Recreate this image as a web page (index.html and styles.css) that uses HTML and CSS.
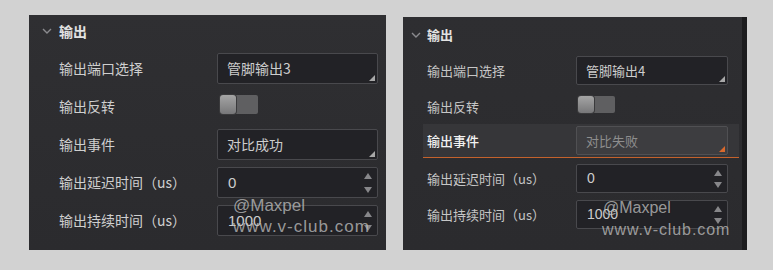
FILE: index.html
```html
<!DOCTYPE html>
<html lang="zh">
<head>
<meta charset="utf-8">
<link rel="stylesheet" href="styles.css">
</head>
<body>
<div class="stage">
  <section class="panel panel-a">
    <div class="hdr">
      <svg class="chev" width="10" height="6" viewBox="0 0 10 6"><polyline points="1,1 5,5 9,1" fill="none" stroke="#8a8a8e" stroke-width="1.4"/></svg>
      <span class="hdr-t">输出</span>
    </div>
    <div class="row">
      <span class="lbl">输出端口选择</span>
      <div class="box"><span class="val">管脚输出3</span><i class="corner"></i></div>
    </div>
    <div class="row">
      <span class="lbl">输出反转</span>
      <div class="toggle"><i class="knob"></i><i class="track"></i></div>
    </div>
    <div class="row">
      <span class="lbl">输出事件</span>
      <div class="box"><span class="val">对比成功</span><i class="corner"></i></div>
    </div>
    <div class="row">
      <span class="lbl">输出延迟时间（us）</span>
      <div class="box spin"><span class="val num">0</span><span class="arrows"><i class="up"></i><i class="dn"></i></span></div>
    </div>
    <div class="row">
      <span class="lbl">输出持续时间（us）</span>
      <div class="box spin"><span class="val num">1000</span><span class="arrows"><i class="up"></i><i class="dn"></i></span></div>
    </div>
    <div class="wm wm-a"><span class="wm1">@Maxpel</span><span class="wm2">www.v-club.com</span></div>
  </section>

  <section class="panel panel-b">
    <div class="hdr">
      <svg class="chev" width="10" height="6" viewBox="0 0 10 6"><polyline points="1,1 5,5 9,1" fill="none" stroke="#8a8a8e" stroke-width="1.4"/></svg>
      <span class="hdr-t">输出</span>
    </div>
    <div class="row">
      <span class="lbl">输出端口选择</span>
      <div class="box"><span class="val">管脚输出4</span><i class="corner"></i></div>
    </div>
    <div class="row">
      <span class="lbl">输出反转</span>
      <div class="toggle"><i class="knob"></i><i class="track"></i></div>
    </div>
    <div class="row hl">
      <span class="lbl">输出事件</span>
      <div class="box dis"><span class="val">对比失败</span><i class="corner orange"></i></div>
    </div>
    <div class="row">
      <span class="lbl">输出延迟时间（us）</span>
      <div class="box spin"><span class="val num">0</span><span class="arrows"><i class="up"></i><i class="dn"></i></span></div>
    </div>
    <div class="row">
      <span class="lbl">输出持续时间（us）</span>
      <div class="box spin"><span class="val num">1000</span><span class="arrows"><i class="up"></i><i class="dn"></i></span></div>
    </div>
    <div class="wm wm-b"><span class="wm1">@Maxpel</span><span class="wm2">www.v-club.com</span></div>
  </section>
</div>
</body>
</html>
```

FILE: styles.css
```css
html, body {
  margin: 0;
  padding: 0;
}
body {
  background: #d2d2d2;
  width: 773px;
  height: 270px;
  overflow: hidden;
  font-family: "Noto Sans CJK SC", "Noto Sans", sans-serif;
}
.stage {
  display: flex;
  align-items: flex-start;
  padding-left: 29px;
  gap: 17px;
}
.panel {
  position: relative;
  box-sizing: border-box;
  display: flex;
  flex-direction: column;
}
.panel-a {
  margin-top: 15px;
  width: 357px;
  height: 235px;
  background: linear-gradient(#2f2f32, #2b2b2e);
}
.panel-b {
  margin-top: 17px;
  width: 344px;
  height: 233px;
  background: linear-gradient(#2e2e31, #2b2b2e);
  border-right: 5px solid #1c1c1e;
}

/* header */
.hdr {
  display: flex;
  align-items: center;
  box-sizing: border-box;
}
.panel-a .hdr { height: 34px; padding-left: 13px; gap: 7px; padding-bottom: 2px; }
.panel-b .hdr { height: 35px; padding-left: 8px; gap: 6px; padding-bottom: 0; }
.hdr-t {
  color: #e2e2e2;
  font-weight: 700;
}
.panel-a .hdr-t { font-size: 14px; }
.panel-b .hdr-t { font-size: 13px; }

/* rows */
.row {
  display: grid;
  align-items: center;
  box-sizing: border-box;
}
.panel-a .row {
  height: 38px;
  grid-template-columns: 158px 161px;
  padding-left: 30px;
}
.panel-b .row {
  height: 36px;
  grid-template-columns: 149px 152px;
  margin-left: 20px;
  margin-right: 3px;
  padding-left: 4px;
}
.panel-b .row.hl {
  height: 34px;
  margin-bottom: 2px;
  background: #363639;
  border-bottom: 1px solid #c4622c;
}
.lbl {
  color: #cfcfcf;
  white-space: nowrap;
}
.panel-a .lbl { font-size: 14px; }
.panel-b .lbl { font-size: 13px; color: #c6c6c6; }
.panel-b .row.hl .lbl { color: #f2f2f2; font-weight: 500; }

/* boxes */
.box {
  position: relative;
  box-sizing: border-box;
  background: #222226;
  border: 1px solid #49494d;
  border-radius: 2px;
  display: flex;
  align-items: center;
}
.panel-a .box { height: 31px; padding-left: 9px; }
.panel-b .box { height: 29px; padding-left: 9px; }
.val {
  color: #cdcdcd;
  white-space: nowrap;
}
.panel-a .val { font-size: 14px; }
.panel-b .val { font-size: 13px; }
.val.num { font-family: "Liberation Sans", "Noto Sans", sans-serif; font-size: 15px; padding-left: 1px; }
.panel-b .val.num { font-size: 14px; }
.box.dis {
  background: #3d3d40;
  border-color: #505053;
}
.box.dis .val { color: #8e8e8e; }

.corner {
  position: absolute;
  right: 2px;
  bottom: 2px;
  width: 0;
  height: 0;
  border-left: 6px solid transparent;
  border-bottom: 6px solid #a8a8a8;
}
.corner.orange { border-bottom-color: #d9692c; }

.arrows {
  position: absolute;
  right: 5px;
  top: 0;
  bottom: 0;
  display: flex;
  flex-direction: column;
  justify-content: space-between;
  padding: 5px 0 4px;
}
.up, .dn {
  display: block;
  width: 0;
  height: 0;
  border-left: 4px solid transparent;
  border-right: 4px solid transparent;
}
.up { border-bottom: 6px solid #87878a; }
.dn { border-top: 6px solid #87878a; }

/* toggle */
.toggle {
  display: flex;
  align-items: stretch;
  margin-left: 3px;
  margin-bottom: 4px;
}
.panel-a .toggle { width: 38px; height: 19px; }
.panel-b .toggle { width: 37px; height: 17px; margin-left: 2px; margin-bottom: 3px; }
.knob {
  display: block;
  width: 16px;
  border-radius: 3px;
  background: linear-gradient(#a5a5a5, #777779);
  box-shadow: 0 0 0 1px #3a3a3c;
  position: relative;
  z-index: 1;
}
.track {
  display: block;
  flex: 1;
  background: #5f5f61;
  border-radius: 0 2px 2px 0;
}

/* watermark */
.wm {
  position: absolute;
  display: flex;
  flex-direction: column;
  font-family: "Liberation Sans", Arial, sans-serif;
  color: rgba(235, 235, 235, 0.62);
  text-shadow: 0 0 1px rgba(0, 0, 0, 0.35);
  pointer-events: none;
  white-space: nowrap;
}
.wm-a { left: 204px; top: 180px; font-size: 17px; line-height: 21px; }
.wm-a .wm1 { padding-left: 0; }
.wm-a .wm2 { letter-spacing: 1px; }
.wm-b { left: 199px; top: 180px; font-size: 16px; line-height: 22px; }
.wm-b .wm1 { padding-left: 1px; }
.wm-b .wm2 { letter-spacing: 0.9px; }
```
